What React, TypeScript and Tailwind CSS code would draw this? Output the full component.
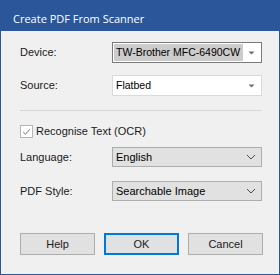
import React from "react";

const FONT = { fontFamily: '"Liberation Sans", Arial, sans-serif' };

function Label({ children }: { children: React.ReactNode }) {
  return <div className="w-[92px] shrink-0 text-[11px] text-[#1a1a1a]">{children}</div>;
}

function Arrow() {
  return (
    <svg width="7" height="4" viewBox="0 0 7 4" className="shrink-0">
      <path d="M0.5 0.5h6L3.5 3.5z" fill="#6d6d6d" />
    </svg>
  );
}

function Chevron() {
  return (
    <svg width="10" height="6" viewBox="0 0 10 6" className="shrink-0">
      <path d="M1 1l4 4 4-4" fill="none" stroke="#4a4a4a" strokeWidth="1" />
    </svg>
  );
}

function EditCombo({ value, active }: { value: string; active?: boolean }) {
  return (
    <div
      className={`flex h-[21px] w-[150px] items-center justify-between border bg-white pl-[1px] pr-[6px] ${
        active ? "border-[#7a7a7a]" : "border-[#d9d9d9]"
      }`}
    >
      <div
        className={`flex h-[17px] items-center overflow-hidden whitespace-nowrap pl-[2px] text-[10.5px] text-black ${
          active ? "w-[129px] bg-[#cccccc]" : ""
        }`}
      >
        {value}
      </div>
      <Arrow />
    </div>
  );
}

function ListCombo({ value }: { value: string }) {
  return (
    <div className="flex h-[20px] w-[150px] items-center justify-between border border-[#adadad] bg-[#e1e1e1] pl-[3px] pr-[5px] text-[11px] text-black">
      <span>{value}</span>
      <Chevron />
    </div>
  );
}

function Button({ children, primary }: { children: React.ReactNode; primary?: boolean }) {
  return (
    <div
      className={`flex h-[22px] w-[75px] items-center justify-center bg-[#e1e1e1] text-[11px] text-[#1a1a1a] ${
        primary ? "border-2 border-[#0078d7]" : "border border-[#adadad]"
      }`}
    >
      {children}
    </div>
  );
}

export default function App() {
  return (
    <div className="flex h-[275px] w-[280px] flex-col" style={FONT}>
      <div
        className="flex h-[31px] shrink-0 items-center bg-[#2b579a] pl-[13px] pt-[7px] text-[11px] text-white"
        style={{ fontFamily: '"Open Sans", "Noto Sans", sans-serif' }}
      >
        Create PDF From Scanner
      </div>
      <div className="flex flex-1 flex-col border-x border-b border-[#2b579a] bg-[#f0f0f0] pl-[19px]">
        <div className="mt-[11px] flex items-center">
          <Label>Device:</Label>
          <EditCombo value="TW-Brother MFC-6490CW" active />
        </div>
        <div className="mt-[12px] flex items-center">
          <Label>Source:</Label>
          <EditCombo value="Flatbed" />
        </div>
        <div className="mt-[14px] h-[1px] w-[241px] bg-[#d7d7d7]" />
        <div className="mt-[14px] flex h-[13px] items-center">
          <div className="flex h-[13px] w-[13px] items-center justify-center border border-[#b5b5b5] bg-white">
            <svg width="9" height="8" viewBox="0 0 9 8">
              <path d="M1.2 4l2.3 2.3L7.8 1.2" fill="none" stroke="#7a7a7a" strokeWidth="1" />
            </svg>
          </div>
          <span className="ml-[3px] text-[11px] text-[#1a1a1a]">Recognise Text (OCR)</span>
        </div>
        <div className="mt-[9px] flex items-center">
          <Label>Language:</Label>
          <ListCombo value="English" />
        </div>
        <div className="mt-[14px] flex items-center">
          <Label>PDF Style:</Label>
          <ListCombo value="Searchable Image" />
        </div>
        <div className="mt-[32px] flex gap-[9px]">
          <Button>Help</Button>
          <Button primary>OK</Button>
          <Button>Cancel</Button>
        </div>
      </div>
    </div>
  );
}
